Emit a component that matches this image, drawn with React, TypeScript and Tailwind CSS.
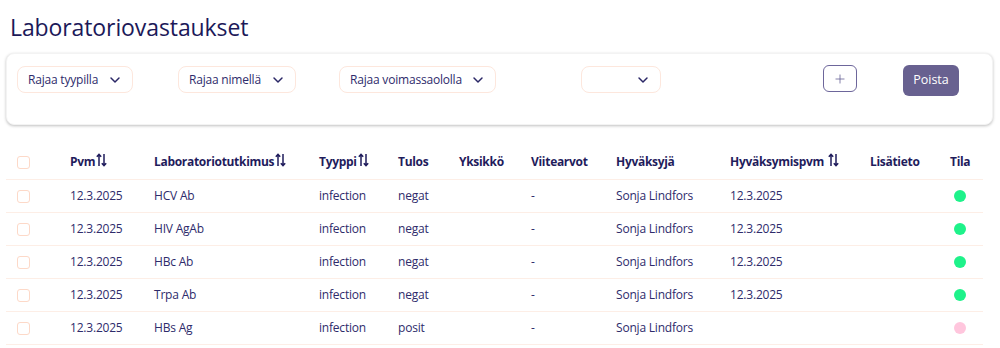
import { ChevronDown, Plus } from 'lucide-react';

const ROWS = [
  { pvm: '12.3.2025', name: 'HCV Ab', type: 'infection', result: 'negat', approver: 'Sonja Lindfors', approved: '12.3.2025', ok: true },
  { pvm: '12.3.2025', name: 'HIV AgAb', type: 'infection', result: 'negat', approver: 'Sonja Lindfors', approved: '12.3.2025', ok: true },
  { pvm: '12.3.2025', name: 'HBc Ab', type: 'infection', result: 'negat', approver: 'Sonja Lindfors', approved: '12.3.2025', ok: true },
  { pvm: '12.3.2025', name: 'Trpa Ab', type: 'infection', result: 'negat', approver: 'Sonja Lindfors', approved: '12.3.2025', ok: true },
  { pvm: '12.3.2025', name: 'HBs Ag', type: 'infection', result: 'posit', approver: 'Sonja Lindfors', approved: '', ok: false },
];

const COLS = 'grid grid-cols-[64px_84px_165px_79px_61px_72px_85px_114px_140px_80px_33px]';

function Select({ label, width }: { label: string; width: string }) {
  return (
    <div className={`${width} h-[27px] flex items-center justify-between pl-[10px] pr-[9px] border border-[#fde7dd] rounded-lg text-[12px] tracking-[-0.2px] whitespace-nowrap text-[#2e2b6b]`}>
      <span>{label}</span>
      <ChevronDown className="w-4 h-4 text-[#2a2766]" strokeWidth={2.2} />
    </div>
  );
}

function Checkbox() {
  return <div className="w-[13px] h-[13px] border border-[#fdd9c8] rounded-[3px] bg-white" />;
}

function SortArrows() {
  return (
    <svg width="11" height="14" viewBox="0 0 11 14" className="inline-block align-[-1px] ml-[1px]" fill="none" stroke="currentColor" strokeWidth="1.5">
      <path d="M3 13V1.5M0.8 3.8L3 1.3L5.2 3.8" />
      <path d="M8 1v11.5M5.8 10.2L8 12.7L10.2 10.2" />
    </svg>
  );
}

export default function App() {
  return (
    <div className="w-[1000px] h-[348px] bg-white overflow-hidden font-['Open_Sans',sans-serif] text-[#2e2b6b]">
      <h1 className="pl-[10px] pt-[11px] text-[23px] leading-[32px] text-[#1c1959] tracking-[-0.1px]">Laboratoriovastaukset</h1>

      <div className="ml-[6px] mt-[10px] w-[987px] h-[72px] rounded-lg bg-white shadow-[0_1px_3px_rgba(0,0,0,0.25)] border border-[#f3f3f3] pt-[12px] pl-[10px]">
        <div className="flex items-start">
          <Select label="Rajaa tyypilla" width="w-[116px]" />
          <div className="ml-[45px]"><Select label="Rajaa nimellä" width="w-[118px]" /></div>
          <div className="ml-[43px]"><Select label="Rajaa voimassaololla" width="w-[157px]" /></div>
          <div className="ml-[85px]"><Select label="" width="w-[80px]" /></div>
          <button className="ml-[162px] -mt-[1px] w-[34px] h-[27px] border border-[#6d669b] rounded-md flex items-center justify-center text-[#5d5790]">
            <Plus className="w-[14px] h-[14px]" strokeWidth={1.3} />
          </button>
          <button className="ml-[46px] -mt-[1px] w-[56px] h-[31px] rounded-md bg-[#686190] text-white text-[12.5px]">Poista</button>
        </div>
      </div>

      <div className="ml-[6px] mt-[20px] w-[977px]">
        <div className={`${COLS} h-[35px] items-center border-b border-[#fdeee6] text-[12px] tracking-[-0.3px] font-bold text-[#1f1c5c]`}>
          <div className="pl-[11px]"><Checkbox /></div>
          <div>Pvm<SortArrows /></div>
          <div>Laboratoriotutkimus<SortArrows /></div>
          <div>Tyyppi<SortArrows /></div>
          <div>Tulos</div>
          <div>Yksikkö</div>
          <div>Viitearvot</div>
          <div>Hyväksyjä</div>
          <div>Hyväksymispvm <SortArrows /></div>
          <div>Lisätieto</div>
          <div>Tila</div>
        </div>
        {ROWS.map((r, i) => (
          <div key={i} className={`${COLS} h-[33px] items-center border-b border-[#fdeee6] text-[12px] tracking-[-0.2px]`}>
            <div className="pl-[11px]"><Checkbox /></div>
            <div>{r.pvm}</div>
            <div>{r.name}</div>
            <div>{r.type}</div>
            <div>{r.result}</div>
            <div></div>
            <div>-</div>
            <div>{r.approver}</div>
            <div>{r.approved}</div>
            <div></div>
            <div className="pl-[4px]">
              <div className={`w-[12px] h-[12px] rounded-full ${r.ok ? 'bg-[#1ef28a]' : 'bg-[#ffc6dd]'}`} />
            </div>
          </div>
        ))}
      </div>
    </div>
  );
}
